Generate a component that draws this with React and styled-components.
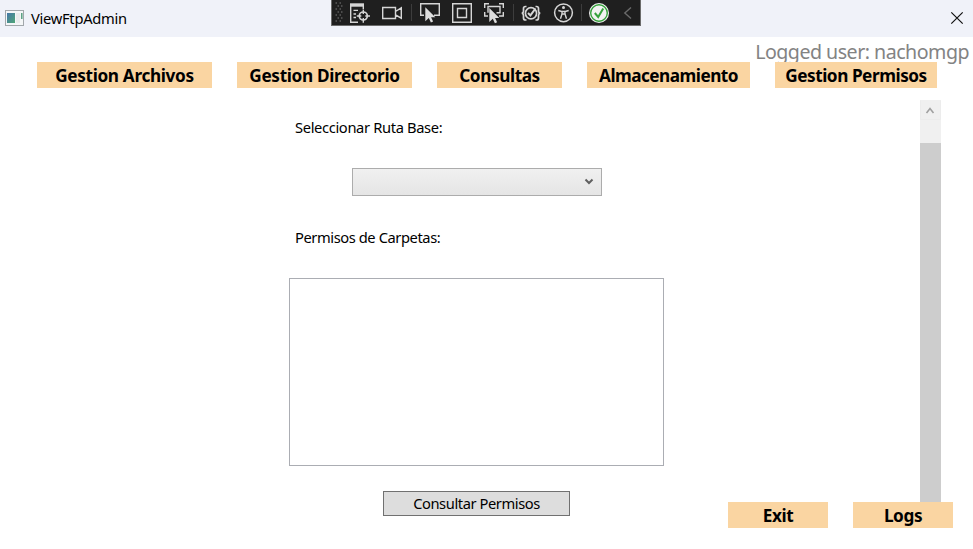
import React from "react";
import styled, { createGlobalStyle } from "styled-components";

const GlobalStyle = createGlobalStyle`
  * { box-sizing: border-box; }
  html, body { margin: 0; padding: 0; background: #fff; overflow: hidden; }
  button { font: inherit; }
`;

const Window = styled.div`
  position: relative;
  width: 973px;
  height: 549px;
  display: flex;
  flex-direction: column;
  overflow: hidden;
  background: #fff;
  color: #000;
  font-family: "Noto Sans", "Open Sans", sans-serif;
  font-size: 14.7px;
`;

const TitleBar = styled.header`
  flex: none;
  height: 37px;
  display: flex;
  align-items: center;
  padding: 0 9px 0 5px;
  background: #f0f2f9;
`;

const AppIcon = styled.svg`
  flex: none;
  width: 20px;
  height: 16px;
  margin: 0 6px 2px 0;
`;

const Title = styled.span`
  flex: 1;
  padding-bottom: 1px;
  white-space: nowrap;
`;

const CloseIcon = styled.svg`
  width: 14px;
  height: 14px;
  margin-bottom: 1px;
`;

const Text = styled.span`
  white-space: nowrap;
  letter-spacing: ${(p) => p.$track || 0}px;
`;

const DebugBar = styled.div`
  position: absolute;
  left: 331px;
  top: 0;
  width: 310px;
  height: 26px;
  display: flex;
  align-items: stretch;
  padding-left: 3px;
  background: #1f1f1f;
  border: solid #6b6b6b;
  border-width: 0 1px 1px;
`;

const Glyph = styled.svg`
  flex: none;
  width: ${(p) => p.$w || 22}px;
  height: 26px;
  margin-left: ${(p) => p.$gap ?? 10}px;
  fill: none;
  stroke: #d6d6d6;
  stroke-width: 1.4;
`;

const Divider = styled.div`
  width: 1px;
  margin: 4px 0 4px ${(p) => p.$gap}px;
  background: #3d3d3d;
`;

const Head = styled.div`
  flex: none;
  height: 63px;
  display: grid;
`;

const UserLabel = styled.div`
  grid-area: 1 / 1;
  justify-self: end;
  padding: 1px 4px 0 0;
  line-height: 28px;
  font-size: 19.6px;
  color: #838383;
`;

const Nav = styled.nav`
  grid-area: 1 / 1;
  z-index: 1;
  display: flex;
  gap: 25px;
  padding: 25px 0 0 37px;
`;

const AccentButton = styled.button`
  flex: none;
  width: ${(p) => p.$w}px;
  height: 26px;
  padding: 1px 0 0;
  border: 0;
  background: #fad5a2;
  color: #000;
  font-size: 17.2px;
  font-weight: 700;
  line-height: 25px;
`;

const Body = styled.main`
  flex: 1;
  min-height: 0;
  display: grid;
`;

const Form = styled.section`
  grid-area: 1 / 1;
  width: 375px;
  margin-left: 289px;
  display: flex;
  flex-direction: column;
`;

const Label = styled.label`
  margin: ${(p) => p.$top}px 0 0 6px;
  height: 20px;
  line-height: 20px;
`;

const Combo = styled.div`
  width: 250px;
  height: 28px;
  margin: 31px 0 0 63px;
  display: flex;
  align-items: center;
  justify-content: flex-end;
  padding: 0 7px 1px 0;
  border: 1px solid #acacac;
  background: linear-gradient(#f0f0f0, #e5e5e5);
`;

const ListBox = styled.div`
  height: 188px;
  margin-top: 31px;
  border: 1px solid #abadb3;
`;

const QueryButton = styled.button`
  width: 187px;
  height: 25px;
  margin: 25px 0 0 94px;
  padding: 0;
  border: 1px solid #707070;
  background: #ddd;
  color: #000;
  line-height: 23px;
`;

const ScrollBar = styled.div`
  grid-area: 1 / 1;
  width: 21px;
  height: 402px;
  margin-left: 920px;
  display: flex;
  flex-direction: column;
  background: #f0f0f0;
`;

const ScrollArrow = styled.svg`
  width: 21px;
  height: 43px;
`;

const ScrollThumb = styled.div`
  flex: 1;
  background: #cdcdcd;
`;

const Footer = styled.footer`
  grid-area: 1 / 1;
  align-self: end;
  justify-self: end;
  display: flex;
  gap: 25px;
  padding: 0 20px 21px 0;
`;

const tabs = [
  ["Gestion Archivos", 175, -0.33],
  ["Gestion Directorio", 175, -0.33],
  ["Consultas", 125, -0.4],
  ["Almacenamiento", 163, -0.52],
  ["Gestion Permisos", 162, -0.45],
];

const cursor = "M0 0V14L3.5 10.8L5.6 15.2L7.8 14.2L5.8 10H10Z";

function DebugToolbar() {
  return (
    <DebugBar>
      <Glyph $w={8} $gap={0} viewBox="0 0 8 26" stroke="none">
        {[3, 6, 9, 12, 15, 18, 21].map((y, i) => (
          <path key={y} d={`M${i % 2 ? 2.5 : 0.5} ${y}h1.5M${i % 2 ? 6 : 4.5} ${y}h1.5`} stroke="#5c5c5c" />
        ))}
      </Glyph>
      <Glyph $gap={6}>
        <path d="M1 5H15" strokeWidth="3.4" />
        <path d="M1.7 4V22.3H9M14.3 5V9M4.5 10.4H9M4.5 14H7M4.5 17.5H7" />
        <circle cx="14.3" cy="16" r="4" strokeWidth="1.7" />
        <path d="M14.3 9.5V14M14.3 18V22.8M7.8 16H12.3M16.3 16H21" />
      </Glyph>
      <Glyph>
        <path d="M1.7 7.5H14.5V18.5H1.7ZM14.5 11.5L20.3 7.8V18.2L14.5 14.8" />
      </Glyph>
      <Divider $gap={8} />
      <Glyph $gap={7}>
        <path d="M5 15.3H1.7V3.7H20.3V15.3H15" />
        <path transform="translate(6.3 7.2)" d={cursor} fill="#dedede" stroke="none" />
      </Glyph>
      <Glyph>
        <path d="M1.7 3.7H20.3V22.3H1.7ZM6.5 8.5H15.5V17.5H6.5Z" />
      </Glyph>
      <Glyph>
        <path d="M1.7 8V3.7H6M16 3.7H20.3V8M1.7 12V16H5M20.3 12V16H16M5 12.8V6.5H17V12.8H13.5" />
        <path transform="translate(6.3 8)" d={cursor} fill="#dedede" stroke="none" />
      </Glyph>
      <Divider $gap={8} />
      <Glyph $gap={6}>
        <path strokeWidth="1.7" d="M6.5 6.5H5.5Q3.5 6.5 3.5 8.5V11Q3.5 13 1.8 13.2Q3.5 13.5 3.5 15.5V18Q3.5 20 5.5 20H6.5M15.5 6.5H16.5Q18.5 6.5 18.5 8.5V11Q18.5 13 20.2 13.2Q18.5 13.5 18.5 15.5V18Q18.5 20 16.5 20H15.5" />
        <circle cx="11" cy="13.3" r="5.6" strokeWidth="1.7" />
        <path d="M8 13L10.4 15.4L15.5 8.5" strokeWidth="2" />
      </Glyph>
      <Glyph>
        <circle cx="11.5" cy="12.8" r="8.9" strokeWidth="1.5" />
        <circle cx="11.5" cy="7.6" r="1.5" fill="#d6d6d6" stroke="none" />
        <path d="M6.3 10.5L10 11.5V14L8.5 18.7M16.7 10.5L13 11.5V14L14.5 18.7M10 11.5H13M10 14H13" />
      </Glyph>
      <Divider $gap={7} />
      <Glyph $gap={6}>
        <circle cx="11" cy="13" r="10" fill="#f2f2f2" stroke="none" />
        <circle cx="11" cy="13" r="8.3" stroke="#35a13b" />
        <path d="M6.8 13L10.2 17L15.2 8.5" stroke="#35a13b" strokeWidth="2" />
      </Glyph>
      <Glyph $w={16} $gap={10}>
        <path d="M11 7.5L4.8 13L11 18.5" stroke="#6a6a6a" />
      </Glyph>
    </DebugBar>
  );
}

export default function App() {
  return (
    <Window>
      <GlobalStyle />
      <TitleBar>
        <AppIcon viewBox="0 0 20 16">
          <defs>
            <linearGradient id="pane" x1="0" y1="0" x2="1" y2="1">
              <stop offset="0" stopColor="#4576a8" />
              <stop offset="1" stopColor="#4fa677" />
            </linearGradient>
          </defs>
          <rect x=".5" y=".5" width="18" height="15" fill="#f4f6f7" stroke="#a2a7ab" />
          <rect x="2" y="3" width="8" height="10" fill="url(#pane)" />
          <path d="M11 3H15V13H11Z" fill="#e9ebec" />
          <path d="M16.8 3V9" stroke="#4d9a78" strokeWidth="1.4" />
        </AppIcon>
        <Title><Text $track={-0.28}>ViewFtpAdmin</Text></Title>
        <CloseIcon viewBox="0 0 14 14">
          <path d="M1.3 1.3L12.7 12.7M12.7 1.3L1.3 12.7" stroke="#111" strokeWidth="1.2" />
        </CloseIcon>
      </TitleBar>
      <DebugToolbar />
      <Head>
        <UserLabel><Text $track={-0.5}>Logged user: nachomgp</Text></UserLabel>
        <Nav>
          {tabs.map(([name, width, track]) => (
            <AccentButton key={name} $w={width}><Text $track={track}>{name}</Text></AccentButton>
          ))}
        </Nav>
      </Head>
      <Body>
        <Form>
          <Label $top={17}><Text $track={-0.35}>Seleccionar Ruta Base:</Text></Label>
          <Combo>
            <svg width="10" height="8" viewBox="0 0 10 8">
              <path d="M1.5 1.5L5 5L8.5 1.5" fill="none" stroke="#606060" strokeWidth="2" />
            </svg>
          </Combo>
          <Label $top={31}><Text $track={-0.42}>Permisos de Carpetas:</Text></Label>
          <ListBox />
          <QueryButton><Text $track={-0.42}>Consultar Permisos</Text></QueryButton>
        </Form>
        <ScrollBar>
          <ScrollArrow viewBox="0 0 21 43">
            <path d="M.5 .5V19.5H20.5V.5" fill="none" stroke="#ececec" />
            <path d="M6.5 13L10 8.5L13.5 13" fill="none" stroke="#a0a0a0" strokeWidth="1.6" />
          </ScrollArrow>
          <ScrollThumb />
        </ScrollBar>
        <Footer>
          <AccentButton $w={100}><Text $track={-0.4}>Exit</Text></AccentButton>
          <AccentButton $w={100}><Text $track={-0.4}>Logs</Text></AccentButton>
        </Footer>
      </Body>
    </Window>
  );
}
